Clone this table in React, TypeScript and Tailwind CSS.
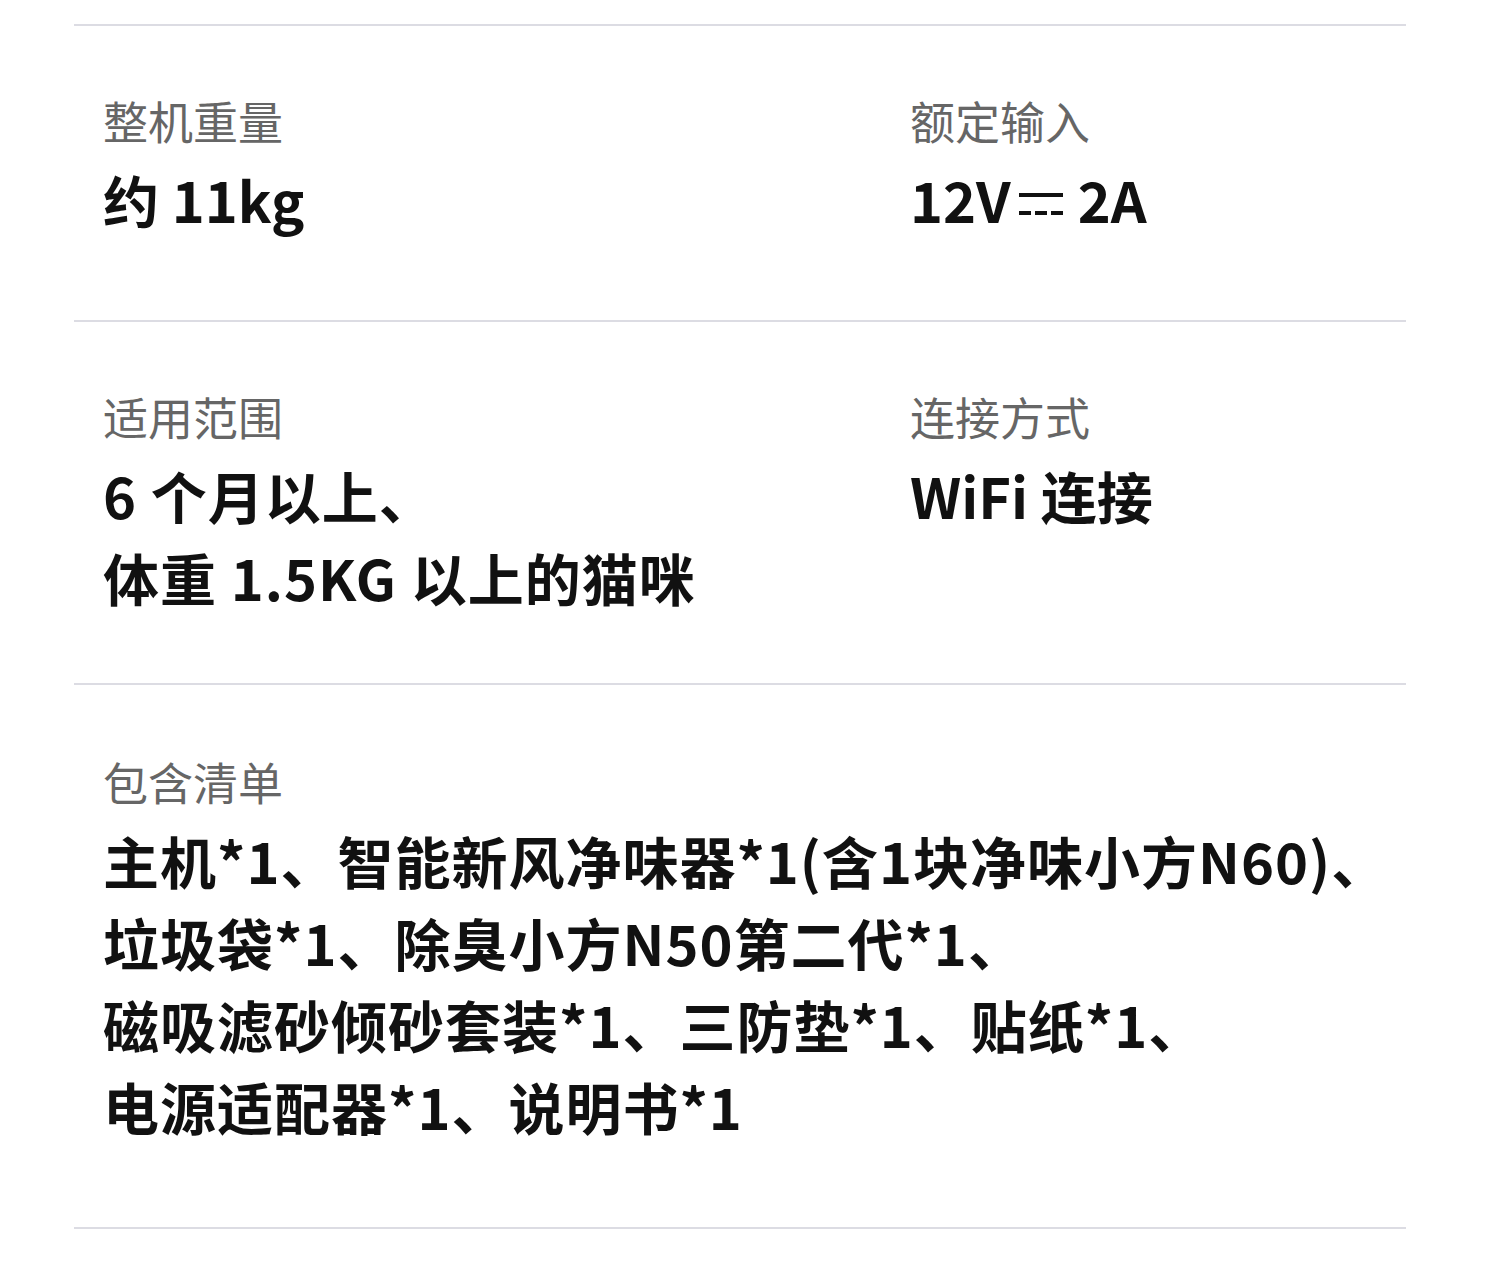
import React from "react";

const font = { fontFamily: '"Noto Sans CJK SC", "Noto Sans", sans-serif' };

function Line() {
  return <div className="h-[2px] bg-[#dcdce3]" />;
}

function Label({ children }: { children: React.ReactNode }) {
  return <div className="text-[45px] leading-[56px] text-[#666666] whitespace-nowrap">{children}</div>;
}

function Value({ children, wide = false }: { children: React.ReactNode; wide?: boolean }) {
  return (
    <div
      className={
        wide
          ? "mt-[9px] text-[56px] leading-[82px] font-bold text-[#111111] whitespace-nowrap tracking-[1px]"
          : "mt-[9px] text-[56px] leading-[82px] font-bold text-[#111111] whitespace-nowrap"
      }
    >
      {children}
    </div>
  );
}

function DC() {
  return (
    <svg width="44" height="26" viewBox="0 0 44 26" className="inline-block ml-[8px] mr-[15px] align-middle -mt-[8px]">
      <rect x="0" y="2" width="44" height="4" fill="#111" />
      <rect x="0" y="20" width="12" height="4" fill="#111" />
      <rect x="16" y="20" width="12" height="4" fill="#111" />
      <rect x="32" y="20" width="12" height="4" fill="#111" />
    </svg>
  );
}

export default function App() {
  return (
    <div className="w-[1500px] h-[1280px] bg-white" style={font}>
      <div className="ml-[74px] w-[1332px] pt-[24px]">
        <Line />
        <div className="grid grid-cols-[807px_1fr] pl-[29px] pt-[67px] pb-[80px]">
          <div>
            <Label>整机重量</Label>
            <Value>约 11kg</Value>
          </div>
          <div>
            <Label>额定输入</Label>
            <Value>
              12V<DC />2A
            </Value>
          </div>
        </div>
        <Line />
        <div className="grid grid-cols-[807px_1fr] pl-[29px] pt-[67px] pb-[65px]">
          <div>
            <Label>适用范围</Label>
            <Value wide>
              6 个月以上、
              <br />
              体重 1.5KG 以上的猫咪
            </Value>
          </div>
          <div>
            <Label>连接方式</Label>
            <Value>WiFi 连接</Value>
          </div>
        </div>
        <Line />
        <div className="pl-[29px] pt-[69px] pb-[80px]">
          <Label>包含清单</Label>
          <Value wide>
            主机*1、智能新风净味器*1(含1块净味小方N60)、
            <br />
            垃圾袋*1、除臭小方N50第二代*1、
            <br />
            磁吸滤砂倾砂套装*1、三防垫*1、贴纸*1、
            <br />
            电源适配器*1、说明书*1
          </Value>
        </div>
        <Line />
      </div>
    </div>
  );
}
